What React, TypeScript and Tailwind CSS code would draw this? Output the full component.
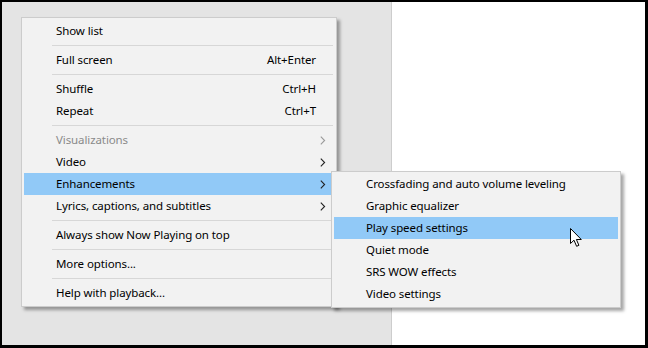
import { Fragment } from 'react';

type Item = {
  label: string;
  shortcut?: string;
  arrow?: boolean;
  disabled?: boolean;
  active?: boolean;
  sep?: boolean;
};

const mainItems: Item[] = [
  { label: 'Show list' },
  { sep: true, label: '' },
  { label: 'Full screen', shortcut: 'Alt+Enter' },
  { sep: true, label: '' },
  { label: 'Shuffle', shortcut: 'Ctrl+H' },
  { label: 'Repeat', shortcut: 'Ctrl+T' },
  { sep: true, label: '' },
  { label: 'Visualizations', arrow: true, disabled: true },
  { label: 'Video', arrow: true },
  { label: 'Enhancements', arrow: true, active: true },
  { label: 'Lyrics, captions, and subtitles', arrow: true },
  { sep: true, label: '' },
  { label: 'Always show Now Playing on top' },
  { sep: true, label: '' },
  { label: 'More options...' },
  { sep: true, label: '' },
  { label: 'Help with playback...' },
];

const subItems: Item[] = [
  { label: 'Crossfading and auto volume leveling' },
  { label: 'Graphic equalizer' },
  { label: 'Play speed settings', active: true },
  { label: 'Quiet mode' },
  { label: 'SRS WOW effects' },
  { label: 'Video settings' },
];

function Chevron({ disabled }: { disabled?: boolean }) {
  return (
    <svg width="6" height="9" viewBox="0 0 6 9" className="absolute right-[8px] top-[7px]">
      <polyline
        points="0.8,0.6 4.6,4.5 0.8,8.4"
        fill="none"
        stroke={disabled ? '#9a9a9a' : '#222'}
        strokeWidth="1.1"
      />
    </svg>
  );
}

function Row({ item }: { item: Item }) {
  return (
    <div
      className={`relative mx-[2px] flex h-[22px] items-center pl-[32px] pr-[18px] ${
        item.active ? 'bg-[#91c9f7]' : ''
      } ${item.disabled ? 'text-[#8a8a8a]' : 'text-[#000]'}`}
    >
      <span className="flex-1 whitespace-nowrap">{item.label}</span>
      {item.shortcut && <span className="whitespace-nowrap">{item.shortcut}</span>}
      {item.arrow && <Chevron disabled={item.disabled} />}
    </div>
  );
}

function Cursor() {
  return (
    <svg width="13" height="20" viewBox="0 0 13 20" className="absolute left-[570px] top-[228px]">
      <path
        d="M0.5 0.5 L0.5 15.5 L4 12.2 L6.6 18.3 L8.9 17.3 L6.4 11.5 L11.3 11.5 Z"
        fill="#fff"
        stroke="#000"
        strokeWidth="1"
        strokeLinejoin="miter"
      />
    </svg>
  );
}

export default function App() {
  return (
    <div
      className="relative h-[348px] w-[648px] overflow-hidden bg-black pt-[2px] pr-[3px] pb-[3px] pl-[2px] text-[11.5px] leading-none tracking-[-0.1px]"
      style={{ fontFamily: '"Segoe UI", "Noto Sans", "Open Sans", sans-serif' }}
    >
      <div className="flex h-full">
        <div className="w-[389px] bg-[#e4e4e4]" />
        <div className="w-[1px] bg-[#cdcdcd]" />
        <div className="flex-1 bg-white" />
      </div>

      <div className="absolute left-[21px] top-[17px] w-[316px] border border-[#cccccc] bg-[#f2f2f2] pt-[2px] pb-[2px] shadow-[3px_3px_3px_rgba(0,0,0,0.35)]">
        {mainItems.map((item, i) => (
          <Fragment key={i}>
            {item.sep ? (
              <div className="py-[3px] pl-[30px] pr-[3px]">
                <div className="h-px bg-[#d7d7d7]" />
              </div>
            ) : (
              <Row item={item} />
            )}
          </Fragment>
        ))}
      </div>

      <div className="absolute left-[331px] top-[171px] w-[290px] border border-[#cccccc] bg-[#f2f2f2] pt-[1px] pb-[2px] shadow-[3px_3px_3px_rgba(0,0,0,0.35)]">
        {subItems.map((item, i) => (
          <Row key={i} item={item} />
        ))}
      </div>

      <Cursor />
    </div>
  );
}
